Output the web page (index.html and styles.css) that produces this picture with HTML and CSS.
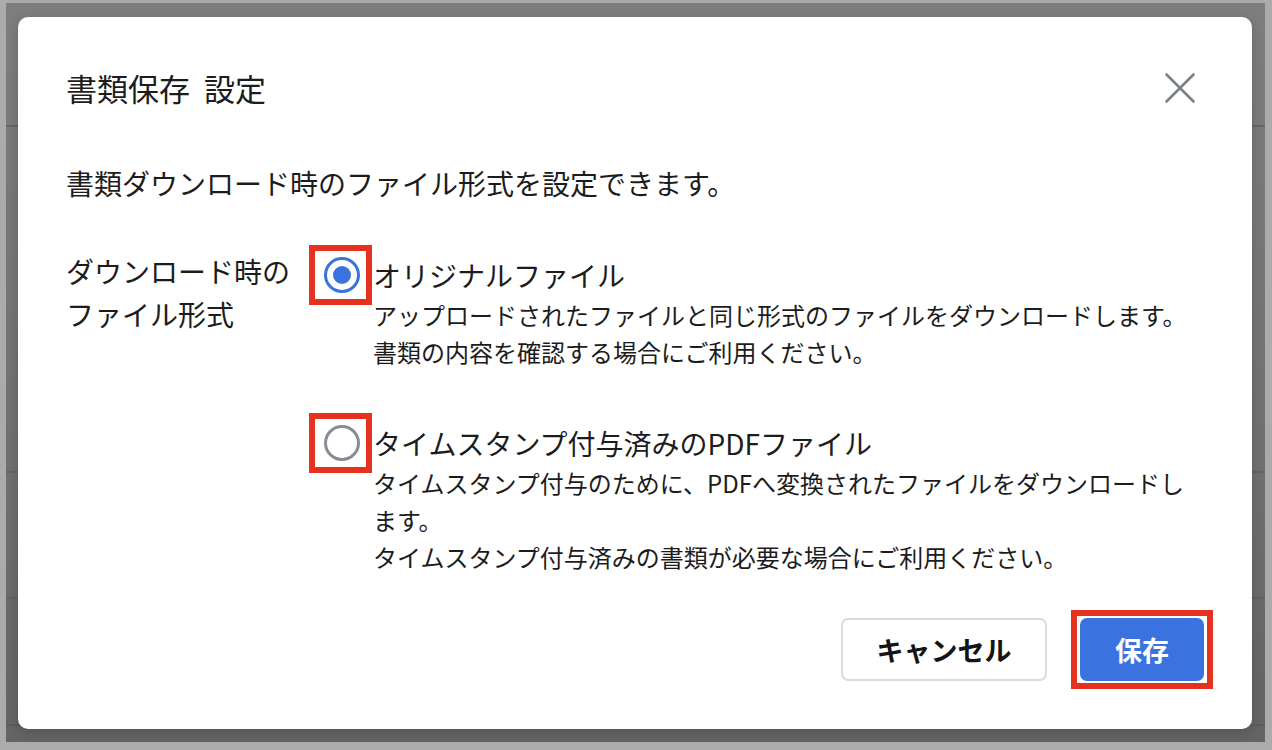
FILE: index.html
```html
<!DOCTYPE html>
<html lang="ja">
<head>
<meta charset="utf-8">
<title>書類保存 設定</title>
<link rel="stylesheet" href="styles.css">
</head>
<body>
<div class="overlay">
  <div class="dialog">
    <header class="dlg-head">
      <h1 class="dlg-title">書類保存 設定</h1>
      <button class="close" aria-label="閉じる">
        <svg width="30" height="30" viewBox="0 0 30 30"><path d="M1.5 1.5 L28.5 28.5 M28.5 1.5 L1.5 28.5" stroke="#7b8088" stroke-width="2.6" stroke-linecap="round" fill="none"/></svg>
      </button>
    </header>
    <p class="lead">書類ダウンロード時のファイル形式を設定できます。</p>
    <div class="field">
      <div class="field-label">ダウンロード時の<br>ファイル形式</div>
      <div class="options">
        <div class="option">
          <span class="hl radio-hl"><span class="radio checked"></span></span>
          <div class="opt-body">
            <div class="opt-title">オリジナルファイル</div>
            <div class="opt-desc">アップロードされたファイルと同じ形式のファイルをダウンロードします。<br>書類の内容を確認する場合にご利用ください。</div>
          </div>
        </div>
        <div class="option">
          <span class="hl radio-hl"><span class="radio"></span></span>
          <div class="opt-body">
            <div class="opt-title">タイムスタンプ付与済みのPDFファイル</div>
            <div class="opt-desc">タイムスタンプ付与のために、PDFへ変換されたファイルをダウンロードし<br>ます。<br>タイムスタンプ付与済みの書類が必要な場合にご利用ください。</div>
          </div>
        </div>
      </div>
    </div>
    <footer class="dlg-foot">
      <button class="btn btn-cancel">キャンセル</button>
      <span class="hl btn-hl"><button class="btn btn-save">保存</button></span>
    </footer>
  </div>
</div>
</body>
</html>
```

FILE: styles.css
```css
html, body {
  margin: 0;
  padding: 0;
}
body {
  width: 1272px;
  height: 750px;
  box-sizing: border-box;
  padding: 3px 7px 8px 6px;
  background: #ababab;
  font-family: "Noto Sans CJK JP", "Noto Sans", sans-serif;
  color: #1c1c1c;
  overflow: hidden;
}
.overlay {
  height: 100%;
  box-sizing: border-box;
  padding: 14px 13px 13px 12px;
  display: flex;
  background:
    linear-gradient(#676767, #676767) 0 122px / 100% 2px no-repeat,
    linear-gradient(#646464, #646464) 0 468px / 100% 2px no-repeat,
    linear-gradient(#626262, #626262) 0 594px / 100% 2px no-repeat,
    linear-gradient(#5c5c5c, #5c5c5c) 0 721px / 100% 2px no-repeat,
    linear-gradient(#7e7e7e, #717171 60%, #646464);
}
.dialog {
  flex: 1;
  background: #fff;
  border-radius: 10px;
  box-shadow: 0 3px 12px rgba(0, 0, 0, 0.18);
  padding: 51px 39px 40px 48px;
  box-sizing: border-box;
  display: flex;
  flex-direction: column;
}
.dlg-head {
  display: flex;
  align-items: center;
  justify-content: space-between;
  height: 40px;
}
.dlg-title {
  margin: 0;
  font-size: 31px;
  font-weight: 400;
  line-height: 40px;
  word-spacing: 7px;
}
.close {
  border: 0;
  background: none;
  padding: 0;
  margin: 0 18px 0 0;
  width: 30px;
  height: 30px;
  display: flex;
}
.lead {
  margin: 55px 0 0;
  font-size: 28px;
  line-height: 40px;
}
.field {
  margin-top: 42px;
  display: grid;
  grid-template-columns: 243px 1fr;
  align-items: start;
}
.field-label {
  margin-top: 5px;
  font-size: 28px;
  line-height: 43px;
}
.options {
  display: flex;
  flex-direction: column;
  gap: 43px;
}
.option {
  display: flex;
  align-items: flex-start;
}
.hl {
  border: 6px solid #e5321f;
  box-sizing: border-box;
  display: flex;
  align-items: center;
  justify-content: center;
  background: #fff;
}
.radio-hl {
  width: 63px;
  height: 60px;
  padding-left: 3px;
  flex: none;
}
.radio {
  width: 36px;
  height: 36px;
  box-sizing: border-box;
  border-radius: 50%;
  border: 3px solid #878c95;
  display: flex;
  align-items: center;
  justify-content: center;
}
.radio.checked {
  border-color: #3b73de;
}
.radio.checked::after {
  content: "";
  width: 18px;
  height: 18px;
  border-radius: 50%;
  background: #3b73de;
}
.opt-body {
  padding: 10px 0 0 1px;
}
.opt-title {
  font-size: 28px;
  line-height: 40px;
  white-space: nowrap;
}
.opt-desc {
  margin-top: 1px;
  font-size: 24px;
  line-height: 37px;
  white-space: nowrap;
}
.dlg-foot {
  margin-top: auto;
  display: flex;
  justify-content: flex-end;
  align-items: center;
  gap: 24px;
}
.btn {
  font-family: "Noto Sans CJK JP", "Noto Sans", sans-serif;
  font-size: 27px;
  font-weight: 700;
  height: 63px;
  box-sizing: border-box;
  border-radius: 7px;
  cursor: pointer;
  padding: 0;
  line-height: 1;
}
.btn-cancel {
  width: 206px;
  background: #fff;
  border: 2px solid #d9dcdf;
  color: #141414;
}
.btn-hl {
  padding: 2px 3px;
}
.btn-save {
  width: 124px;
  background: #3a73df;
  border: 0;
  color: #fff;
}
```
